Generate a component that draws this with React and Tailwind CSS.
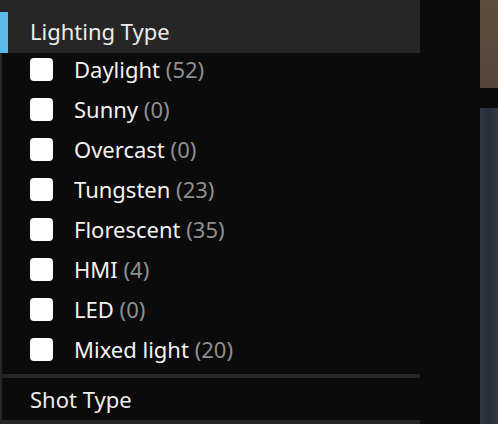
import React from "react";

const items = [
  ["Daylight", 52],
  ["Sunny", 0],
  ["Overcast", 0],
  ["Tungsten", 23],
  ["Florescent", 35],
  ["HMI", 4],
  ["LED", 0],
  ["Mixed light", 20],
];

export default function App() {
  return (
    <div
      className="w-[498px] h-[424px] overflow-hidden bg-[#0b0b0b] flex"
      style={{ fontFamily: "'Noto Sans', sans-serif" }}
    >
      <div className="w-[420px] flex flex-col shrink-0">
        <div className="h-[53px] bg-[#262626] flex items-stretch">
          <div className="w-[8px] flex flex-col">
            <div className="h-[12px] bg-[#262626]" />
            <div className="flex-1 bg-[#5bbcec]" />
          </div>
          <div className="pl-[22px] pt-[18px] text-[22px] leading-[26px] text-[#ececec]">
            Lighting Type
          </div>
        </div>
        <div className="flex border-l-[2px] border-[#262626]">
          <div className="flex flex-col flex-1">
            {items.map(([label, n]) => (
              <div key={label} className="h-10 flex items-start pl-[28px]">
                <div className="mt-[5px] w-[23px] h-[23px] rounded-[4px] bg-white shrink-0" />
                <div className="mt-[3px] ml-[21px] text-[22px] leading-[26px] text-[#f2f2f2]">
                  {label} <span className="text-[#8f8f8f]">({n})</span>
                </div>
              </div>
            ))}
          </div>
        </div>
        <div className="h-[1px] border-l-[2px] border-[#262626]" />
        <div className="h-[4px] bg-[#262626]" />
        <div className="h-[42px] border-l-[2px] border-[#262626] flex items-center pl-[28px] text-[22px] leading-[26px] text-[#ececec]">
          Shot Type
        </div>
        <div className="flex-1 bg-[#262626]" />
      </div>
      <div className="flex-1" />
      <div className="w-[18px] flex flex-col shrink-0">
        <div className="h-[88px] bg-[linear-gradient(180deg,#5d4f3f,#54473a)]" />
        <div className="h-[20px]" />
        <div className="flex-1 bg-[linear-gradient(90deg,#2f3944,#262d36_50%,#303a46)]" />
      </div>
    </div>
  );
}
